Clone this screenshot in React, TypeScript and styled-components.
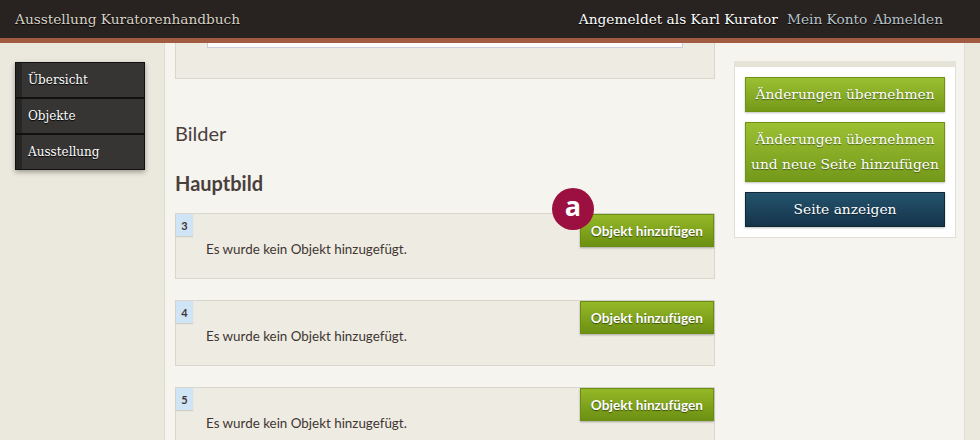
import React from "react";
import styled, { createGlobalStyle } from "styled-components";

const Global = createGlobalStyle`
  *, *::before, *::after { box-sizing: border-box; }
  html, body { margin: 0; padding: 0; }
  body {
    background: #ebe8de;
    font-family: "Lato", "Open Sans", sans-serif;
    color: #3f3633;
    height: 440px;
    overflow: hidden;
  }
`;

const serif = `"DejaVu Serif", "Liberation Serif", serif`;

const Header = styled.header`
  height: 43px;
  background: #282320;
  border-bottom: 5px solid #a15b41;
  display: flex;
  align-items: center;
  justify-content: space-between;
  padding: 0 37px 0 15px;
  font-family: ${serif};
  font-size: 13.7px;
`;

const Brand = styled.div`
  color: #d8d2c6;
  text-shadow: 0 1px 1px #000;
`;

const UserNav = styled.nav`
  display: flex;
  gap: 6px;
`;

const UserLink = styled.span<{ $strong?: boolean }>`
  color: ${(p) => (p.$strong ? "#ffffff" : "#b9c3c9")};
  text-shadow: 0 1px 1px #000;
  margin-right: ${(p) => (p.$strong ? "3px" : "0")};
`;

const Body = styled.div`
  display: flex;
  align-items: stretch;
  height: 397px;
`;

const Sidebar = styled.aside`
  width: 164px;
  padding: 19px 19px 0 15px;
  flex-shrink: 0;
`;

const Menu = styled.ul`
  list-style: none;
  margin: 0;
  padding: 0;
  box-shadow: 0 2px 5px rgba(0, 0, 0, 0.35);
`;

const MenuItem = styled.li`
  height: 36px;
  display: flex;
  align-items: center;
  padding-left: 12px;
  background: #363534;
  border: 1px solid #111;
  box-shadow: inset 6px 0 0 #262626;
  font-family: ${serif};
  font-size: 12px;
  color: #fff;
  text-shadow: 0 1px 1px #000;
`;

const Main = styled.main`
  width: 801px;
  flex-shrink: 0;
  background: #f5f4ef;
  border-left: 1px solid #dedbd1;
  border-right: 1px solid #e0ddd3;
  display: grid;
  grid-template-columns: 540px 222px;
  column-gap: 19px;
  padding-left: 10px;
  align-items: start;
`;

const Content = styled.div`
  display: flex;
  flex-direction: column;
`;

const TopBox = styled.div`
  height: 36px;
  background: #eeebe2;
  border: 1px solid #d9d6cd;
  border-top: none;
  padding: 0 31px;
`;

const Field = styled.div`
  height: 5px;
  background: #fff;
  border: 1px solid #cfccd6;
  border-top: none;
`;

const H2 = styled.h2`
  margin: 42px 0 0;
  font-size: 20px;
  font-weight: 400;
  color: #4a3f3c;
  line-height: 24px;
`;

const H3 = styled.h3`
  margin: 26px 0 0;
  font-size: 20px;
  font-weight: 700;
  color: #4a3f3c;
  line-height: 24px;
`;

const Items = styled.div`
  margin-top: 18px;
  display: flex;
  flex-direction: column;
  gap: 21px;
`;

const Item = styled.div`
  position: relative;
  height: 66px;
  background: #eeebe2;
  border: 1px solid #d9d6cd;
  display: flex;
  justify-content: space-between;
  align-items: flex-start;
`;

const ItemLeft = styled.div`
  display: flex;
  flex-direction: column;
`;

const Num = styled.span`
  width: 17px;
  height: 22px;
  background: #cfe5f5;
  font-size: 11px;
  font-weight: 700;
  color: #3f3633;
  display: flex;
  align-items: center;
  justify-content: center;
  box-shadow: 0 1px 1px rgba(0, 0, 0, 0.12);
`;

const Empty = styled.p`
  margin: 5px 0 0 30px;
  font-size: 13.4px;
  color: #3f3633;
`;

const GreenButton = styled.button`
  height: 33px;
  padding: 0 10px;
  border: 1px solid #6a8d14;
  background: linear-gradient(#95b827, #6c9012);
  color: #fff;
  font-family: "Lato", sans-serif;
  font-weight: 700;
  font-size: 13.6px;
  text-shadow: 0 1px 1px rgba(0, 0, 0, 0.5);
  box-shadow: 0 1px 2px rgba(0, 0, 0, 0.3);
  cursor: pointer;
`;

const Marker = styled.span`
  position: absolute;
  left: 376px;
  top: -26px;
  width: 42px;
  height: 42px;
  border-radius: 50%;
  background: #9b1040;
  color: #fff;
  font-family: "Open Sans", sans-serif;
  font-weight: 700;
  font-size: 27px;
  line-height: 36px;
  text-align: center;
`;

const Panel = styled.div`
  margin-top: 18px;
  background: #fff;
  border: 1px solid #e2dfd7;
  border-top: 6px solid #e6e3d9;
  padding: 10px 10px 10px;
  display: flex;
  flex-direction: column;
  gap: 10px;
`;

const PanelButton = styled.button<{ $tone: "green" | "blue" }>`
  width: 200px;
  padding: 4px 0;
  border: 1px solid ${(p) => (p.$tone === "green" ? "#6f9211" : "#0f2838")};
  background: ${(p) =>
    p.$tone === "green"
      ? "linear-gradient(#9cc032, #74991a)"
      : "linear-gradient(#24536d, #15344a)"};
  color: #fff;
  font-family: ${serif};
  font-size: 13.8px;
  line-height: 25px;
  text-shadow: 0 1px 1px rgba(0, 0, 0, 0.45);
  box-shadow: 0 1px 2px rgba(0, 0, 0, 0.25);
`;

const items = [3, 4, 5];

export default function App() {
  return (
    <>
      <Global />
      <Header>
        <Brand>Ausstellung Kuratorenhandbuch</Brand>
        <UserNav>
          <UserLink $strong>Angemeldet als Karl Kurator</UserLink>
          <UserLink>Mein Konto</UserLink>
          <UserLink>Abmelden</UserLink>
        </UserNav>
      </Header>
      <Body>
        <Sidebar>
          <Menu>
            <MenuItem>Übersicht</MenuItem>
            <MenuItem>Objekte</MenuItem>
            <MenuItem>Ausstellung</MenuItem>
          </Menu>
        </Sidebar>
        <Main>
          <Content>
            <TopBox>
              <Field />
            </TopBox>
            <H2>Bilder</H2>
            <H3>Hauptbild</H3>
            <Items>
              {items.map((n, i) => (
                <Item key={n}>
                  {i === 0 && <Marker>a</Marker>}
                  <ItemLeft>
                    <Num>{n}</Num>
                    <Empty>Es wurde kein Objekt hinzugefügt.</Empty>
                  </ItemLeft>
                  <GreenButton>Objekt hinzufügen</GreenButton>
                </Item>
              ))}
            </Items>
          </Content>
          <Panel>
            <PanelButton $tone="green">Änderungen übernehmen</PanelButton>
            <PanelButton $tone="green">
              Änderungen übernehmen
              <br />
              und neue Seite hinzufügen
            </PanelButton>
            <PanelButton $tone="blue">Seite anzeigen</PanelButton>
          </Panel>
        </Main>
      </Body>
    </>
  );
}
